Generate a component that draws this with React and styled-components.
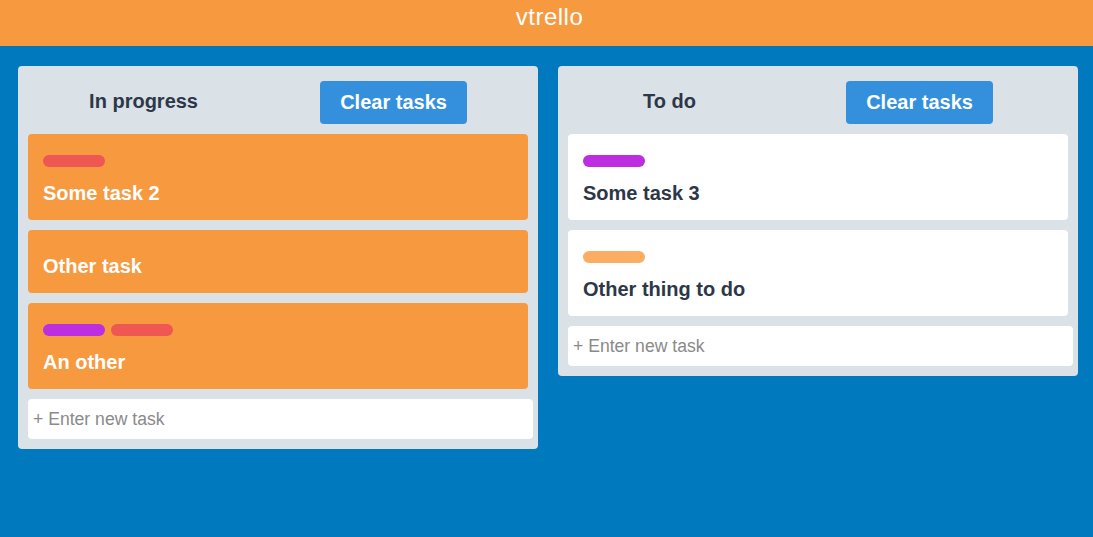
import React from "react";
import styled, { createGlobalStyle } from "styled-components";

const GlobalStyle = createGlobalStyle`
  html, body {
    margin: 0;
    padding: 0;
    background: #0079bf;
    font-family: "Liberation Sans", Arial, sans-serif;
  }
  * { box-sizing: border-box; }
`;

const Page = styled.div`
  min-height: 537px;
  background: #0079bf;
`;

const TopBar = styled.header`
  height: 46px;
  background: #f6993f;
  color: #ffffff;
  text-align: center;
  padding-top: 3px;
`;

const Brand = styled.h1`
  margin: 0;
  padding-left: 6px;
  font-size: 24px;
  font-weight: 400;
  letter-spacing: 0.5px;
  line-height: 28px;
`;

const Board = styled.main`
  display: flex;
  align-items: flex-start;
  gap: 20px;
  padding: 20px 18px;
`;

const List = styled.section`
  flex: 0 0 520px;
  width: 520px;
  background: #dae1e7;
  border-radius: 4px;
  padding: 10px;
  display: flex;
  flex-direction: column;
  gap: 10px;
`;

const ListHeader = styled.div`
  display: flex;
  justify-content: space-around;
  align-items: center;
  padding-top: 5px;
`;

const ListTitle = styled.h2`
  margin: 0 0 4px;
  font-size: 20px;
  font-weight: 700;
  color: #2d3748;
  line-height: 24px;
`;

const ClearButton = styled.button`
  border: none;
  border-radius: 4px;
  background: #3490dc;
  color: #ffffff;
  font-family: inherit;
  font-size: 20px;
  font-weight: 700;
  line-height: 27px;
  padding: 8px 20px;
  cursor: pointer;
`;

const Card = styled.article`
  border-radius: 4px;
  padding: 15px;
  background: ${(p) => (p.$active ? "#f6993f" : "#ffffff")};
  color: ${(p) => (p.$active ? "#ffffff" : "#2d3748")};
`;

const Labels = styled.div`
  display: flex;
  align-items: flex-start;
  gap: 6px;
  height: ${(p) => (p.$empty ? "0" : "23px")};
  padding-top: ${(p) => (p.$empty ? "0" : "6px")};
`;

const Label = styled.span`
  display: block;
  width: 62px;
  height: 12px;
  border-radius: 6px;
  background: ${(p) => p.$color};
`;

const CardTitle = styled.h3`
  margin: 9px 0 0;
  font-size: 20px;
  font-weight: 700;
  line-height: 24px;
`;

const NewTask = styled.input`
  box-sizing: content-box;
  width: 100%;
  height: 40px;
  padding: 0 0 0 5px;
  border: none;
  border-radius: 4px;
  background: #ffffff;
  font-family: inherit;
  font-size: 17.6px;
  color: #2d3748;
  outline: none;
  &::placeholder {
    color: #8a8a8a;
  }
`;

const COLORS = {
  red: "#ef5753",
  purple: "#bc2ee0",
  orange: "#faad63",
};

const lists = [
  {
    title: "In progress",
    active: true,
    tasks: [
      { title: "Some task 2", labels: ["red"] },
      { title: "Other task", labels: [] },
      { title: "An other", labels: ["purple", "red"] },
    ],
  },
  {
    title: "To do",
    active: false,
    tasks: [
      { title: "Some task 3", labels: ["purple"] },
      { title: "Other thing to do", labels: ["orange"] },
    ],
  },
];

export default function App() {
  return (
    <Page>
      <GlobalStyle />
      <TopBar>
        <Brand>vtrello</Brand>
      </TopBar>
      <Board>
        {lists.map((list) => (
          <List key={list.title}>
            <ListHeader>
              <ListTitle>{list.title}</ListTitle>
              <ClearButton>Clear tasks</ClearButton>
            </ListHeader>
            {list.tasks.map((task) => (
              <Card key={task.title} $active={list.active}>
                <Labels $empty={task.labels.length === 0}>
                  {task.labels.map((l, i) => (
                    <Label key={i} $color={COLORS[l]} />
                  ))}
                </Labels>
                <CardTitle>{task.title}</CardTitle>
              </Card>
            ))}
            <NewTask placeholder="+ Enter new task" />
          </List>
        ))}
      </Board>
    </Page>
  );
}
